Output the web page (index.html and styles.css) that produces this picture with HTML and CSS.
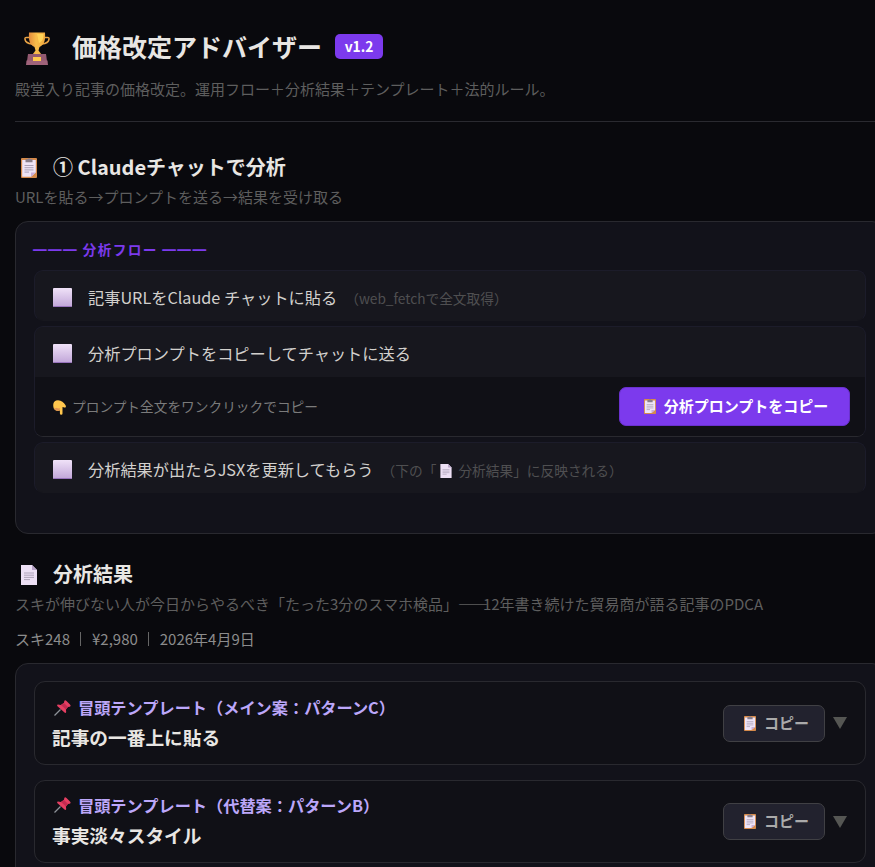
FILE: index.html
```html
<!DOCTYPE html>
<html lang="ja">
<head>
  <meta charset="UTF-8" />
  <meta name="viewport" content="width=device-width, initial-scale=1.0"/>
  <title>価格改定アドバイザー</title>
  <link rel="stylesheet" href="styles.css">
</head>
<body>

  <!-- Icon set -->
  <svg class="icon-defs" width="0" height="0">
    <defs>
      <linearGradient id="gold" x1="0" x2="1">
        <stop offset="0" stop-color="#e28a3c"/>
        <stop offset=".45" stop-color="#f8bd4a"/>
        <stop offset="1" stop-color="#f2aa3e"/>
      </linearGradient>
      <linearGradient id="lilac" x1="0" y1="0" x2="0" y2="1">
        <stop offset="0" stop-color="#f0e2f8"/>
        <stop offset="1" stop-color="#c0a5d8"/>
      </linearGradient>
    </defs>
    <symbol id="trophy" viewBox="0 0 26 33">
      <path d="M6.500 5.500H3Q.6 5 1 7.500C1.500 10 4 11.500 8 12M19.500 5.500H23q2.400-.5 2 2C24.500 10 22 11.500 18 12" fill="none" stroke="#e9a345" stroke-width="1.500"/>
      <path d="M5 .5h16C21.500 8.500 20.500 12.500 15.500 15L14.500 18.500l3 4h-9l3-4-1-3.500C5.500 12.500 4.500 8.500 5 .5z" fill="url(#gold)"/>
      <path d="M13 2h6.500c0 4.500-1 7.500-4.500 9z" fill="#ffd257"/>
      <path d="M4 22h18l1 7H3z" fill="#935a70"/>
      <path d="M2.500 28.500h21l.5 4.500H2z" fill="#a0637a"/>
      <rect x="9" y="25" width="8" height="4" fill="#ffc94c"/>
    </symbol>
    <symbol id="clipboard" viewBox="0 0 16 20">
      <rect width="16" height="20" rx="1" fill="#d58a4b"/>
      <path d="M1.200 2h13.600v12.500L10 18.800H1.200z" fill="#eee4f7"/>
      <path d="M10 18.800v-4.300h4.800z" fill="#c9afd9"/>
      <path d="M4.500 1.300h2Q8-.6 9.500 1.300h2v2.900h-7z" fill="#887e8b"/>
      <path d="M3.500 7.500h9M3.500 9.700h9M3.500 11.900h9M3.500 14.100h4.500" stroke="#9b91a8" stroke-width=".8"/>
    </symbol>
    <symbol id="page" viewBox="0 0 16 20">
      <path d="M0 0h11l5 5v15H0z" fill="#ede0f5"/>
      <path d="M11 0v5h5z" fill="#b8a3c7"/>
      <path d="M3 8h10M3 10.200h10M3 12.400h10M3 14.600h6" stroke="#9e94a9" stroke-width=".8"/>
    </symbol>
    <symbol id="box" viewBox="0 0 19 19">
      <rect width="19" height="19" rx="1" fill="url(#lilac)"/>
      <path d="M.5 18.500h18" stroke="#9873bd"/>
    </symbol>
    <symbol id="hand" viewBox="0 0 13 15">
      <path d="M.2 5C.2 2 2.200.2 5 .2c3.500 0 5.800 2.500 7.400 4.800 1 1.600.4 3-.9 2.600L9.500 7v6.500q0 1.300-1.300 1.300t-1.300-1.300V10.500Q4.600 11.300 3 10.500.2 9.500.2 5z" fill="#ffc64d"/>
      <path d="M.8 7.500q2 1.300 3 .3 1.200 1.200 2.900.3v2.400Q4.600 11.300 3 10.500 1.300 9.700.8 7.500z" fill="#e19351"/>
    </symbol>
    <symbol id="pin" viewBox="0 0 17 16">
      <path d="M.5 15.500l6-6" stroke="#8e9299" stroke-width="1.300"/>
      <path d="M10.300 1q.7-1.500 2.200 0l3.500 3.500q1.400 1.500-.3 2.200l-1.800.3-2 2.500.3 2.500q-.4 1.500-1.700.5L3.500 6.300q-1-1.400.5-1.700l2.800.4L10 2.800z" fill="#e53f62"/>
      <path d="M10 3l4 4-2 2.500L7 5z" fill="#c42b50"/>
    </symbol>
  </svg>

  <div class="page">
    <header class="page-header">
      <div class="title-row">
        <svg class="icon-trophy"><use href="#trophy"/></svg>
        <h1>価格改定アドバイザー</h1>
        <span class="version">v1.2</span>
      </div>
      <p class="lead">殿堂入り記事の価格改定。運用フロー＋分析結果＋テンプレート＋法的ルール。</p>
    </header>

    <!-- Step 1 -->
    <section>
      <div class="section-title">
        <svg class="icon-section"><use href="#clipboard"/></svg>
        <h2>① Claudeチャットで分析</h2>
      </div>
      <p class="section-sub">URLを貼る→プロンプトを送る→結果を受け取る</p>

      <div class="panel flow">
        <div class="flow-label">━━━ 分析フロー ━━━</div>

        <div class="step">
          <div class="step-head">
            <svg class="icon-box"><use href="#box"/></svg>
            <span class="step-text">記事URLをClaude チャットに貼る</span>
            <span class="step-note">（web_fetchで全文取得）</span>
          </div>
        </div>

        <div class="step open">
          <div class="step-head">
            <svg class="icon-box"><use href="#box"/></svg>
            <span class="step-text">分析プロンプトをコピーしてチャットに送る</span>
          </div>
          <div class="step-body">
            <svg class="icon-hand"><use href="#hand"/></svg>
            <span class="hint">プロンプト全文をワンクリックでコピー</span>
            <button class="btn-primary"><svg class="icon-copy"><use href="#clipboard"/></svg>分析プロンプトをコピー</button>
          </div>
        </div>

        <div class="step">
          <div class="step-head">
            <svg class="icon-box"><use href="#box"/></svg>
            <span class="step-text">分析結果が出たらJSXを更新してもらう</span>
            <span class="step-note">（下の「<svg class="icon-note"><use href="#page"/></svg> 分析結果」に反映される）</span>
          </div>
        </div>
      </div>
    </section>

    <!-- Results -->
    <section class="results">
      <div class="section-title">
        <svg class="icon-section"><use href="#page"/></svg>
        <h2>分析結果</h2>
      </div>
      <p class="section-sub">スキが伸びない人が今日からやるべき「たった3分のスマホ検品」<span class="dash">——</span>12年書き続けた貿易商が語る記事のPDCA</p>
      <p class="meta"><span>スキ248</span><i></i><span>¥2,980</span><i></i><span>2026年4月9日</span></p>

      <div class="panel cards">
        <div class="card">
          <div class="card-text">
            <div class="card-label"><svg class="icon-pin"><use href="#pin"/></svg>冒頭テンプレート（メイン案：パターンC）</div>
            <h3>記事の一番上に貼る</h3>
          </div>
          <button class="btn-copy"><svg class="icon-copy"><use href="#clipboard"/></svg>コピー</button>
          <span class="arrow"></span>
        </div>
        <div class="card">
          <div class="card-text">
            <div class="card-label"><svg class="icon-pin"><use href="#pin"/></svg>冒頭テンプレート（代替案：パターンB）</div>
            <h3>事実淡々スタイル</h3>
          </div>
          <button class="btn-copy"><svg class="icon-copy"><use href="#clipboard"/></svg>コピー</button>
          <span class="arrow"></span>
        </div>
      </div>
    </section>
  </div>

</body>
</html>
```
FILE: styles.css
```css
* {
  box-sizing: border-box;
}

body {
  margin: 0;
  height: 867px;
  font-family: "Noto Sans CJK JP", sans-serif;
  background: #09090d;
  color: #e8e6e3;
  overflow: hidden;
  white-space: nowrap;
}

h1, h2, h3, p {
  margin: 0;
}

svg {
  display: block;
  flex: none;
}

.icon-defs {
  position: absolute;
}

.page {
  width: 885px;
  padding: 26px 0 0 15px;
}

.page-header {
  height: 96px;
  border-bottom: 1px solid #2a2a30;
}

.title-row {
  display: flex;
  align-items: center;
  height: 40px;
}

.icon-trophy {
  width: 26px;
  height: 33px;
  margin: 5px 22px 0 9px;
}

h1 {
  font-size: 25px;
  line-height: 40px;
  font-weight: 700;
}

.version {
  width: 48px;
  height: 25px;
  margin: 1px 0 0 13px;
  border-radius: 5px;
  background: #7c3aed;
  color: #fff;
  font-size: 13.800px;
  line-height: 24px;
  font-weight: 700;
  text-align: center;
}

.lead {
  margin-top: 12px;
  font-size: 15px;
  line-height: 22px;
  color: #5e5e5e;
}

.section-title {
  display: flex;
  align-items: center;
  height: 30px;
  margin-top: 30px;
}

.icon-section {
  width: 16px;
  height: 20px;
  margin: 2px 16px 0 6px;
}

h2 {
  font-size: 20px;
  line-height: 30px;
  font-weight: 700;
}

.section-sub {
  margin-top: 4px;
  font-size: 15px;
  line-height: 22px;
  color: #5e5e5e;
}

.dash {
  margin-right: -2.500px;
  letter-spacing: -2.500px;
}

.panel {
  border: 1px solid #29292f;
  border-radius: 13px;
  background: #12121a;
}

.flow {
  height: 313px;
  margin-top: 13px;
  padding: 17px 18px;
}

.flow-label {
  height: 20px;
  margin: 0 0 11px -1px;
  font-size: 13.700px;
  line-height: 20px;
  font-weight: 700;
  letter-spacing: 1.360px;
  color: #7c3aed;
}

.step {
  height: 51px;
  margin-bottom: 5px;
  border: 1px solid #1c1c2a;
  border-bottom-color: #17171e;
  border-radius: 9px;
  background: #17171e;
  overflow: hidden;
}

.step.open {
  height: 111px;
  border-bottom-color: #29292f;
}

.step-head {
  display: flex;
  align-items: center;
  height: 50px;
  padding: 2px 18px 1px;
}

.icon-box {
  width: 19px;
  height: 19px;
  margin: 2px 16px 0 0;
}

.step-text {
  font-size: 16.220px;
  color: #d2d0cd;
}

.step-note {
  margin: 2px 0 0 8px;
  font-size: 13.700px;
  color: #4f4f51;
}

.icon-note {
  display: inline-block;
  width: 12px;
  height: 14px;
  margin: 0 3px 0 4px;
  vertical-align: -2px;
}

.step-body {
  display: flex;
  align-items: center;
  height: 59px;
  padding: 0 15px 0 18px;
  background: #101016;
}

.icon-hand {
  width: 13px;
  height: 15px;
  margin: 2px 6px 0 0;
}

.hint {
  margin-bottom: 2px;
  font-size: 13.700px;
  color: #7b7b7b;
}

button {
  display: flex;
  align-items: center;
  justify-content: center;
  padding: 0 0 2px;
  font-family: inherit;
  font-size: 15px;
  font-weight: 700;
  border-radius: 7px;
}

.btn-primary {
  width: 231px;
  height: 39px;
  margin-left: auto;
  padding-left: 3px;
  border: 1px solid #6a31ce;
  background: #7c3aed;
  color: #fff;
}

.icon-copy {
  width: 12px;
  height: 15px;
  margin: 2px 8px 0 0;
}

.results .section-title {
  margin-top: 25px;
}

.meta {
  display: flex;
  align-items: center;
  margin-top: 13px;
  font-size: 15px;
  line-height: 22px;
  color: #8c8c8c;
}

.meta i {
  width: 1px;
  height: 14px;
  margin: 0 10.500px;
  background: #666;
}

.cards {
  height: 240px;
  margin-top: 13px;
  padding: 17px 18px;
}

.card {
  display: flex;
  align-items: center;
  height: 84px;
  margin-bottom: 15px;
  padding: 0 18px 0 17px;
  border: 1px solid #29292f;
  border-radius: 11px;
  background: #101016;
}

.card + .card {
  height: 83px;
}

.card-text {
  flex: 1;
}

.card + .card .card-text {
  padding-bottom: 2px;
}

.card-label {
  display: flex;
  align-items: center;
  font-size: 16.200px;
  line-height: 26px;
  font-weight: 700;
  color: #bca7fa;
}

.icon-pin {
  width: 17px;
  height: 16px;
  margin: 1px 7px 0 2px;
}

h3 {
  margin-top: 1px;
  font-size: 18.700px;
  line-height: 31px;
  font-weight: 700;
}

.btn-copy {
  width: 102px;
  height: 37px;
  padding-left: 5px;
  border: 1px solid #404044;
  background: #22222e;
  color: #aaa;
}

.arrow {
  margin-left: 8px;
  border: 7px solid transparent;
  border-top: 12px solid #555653;
  border-bottom: 0;
}
```
